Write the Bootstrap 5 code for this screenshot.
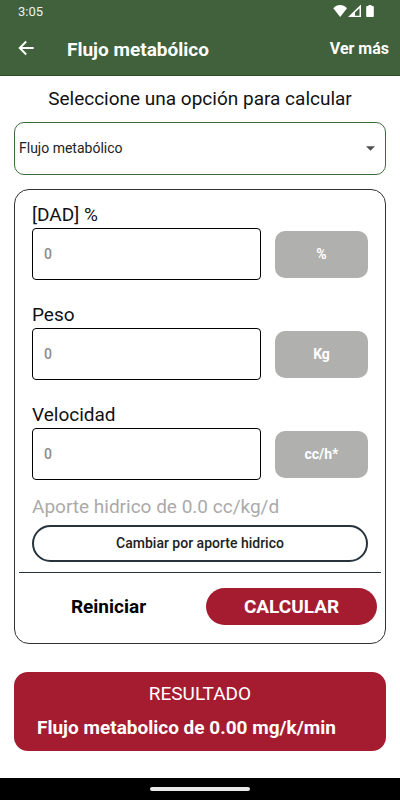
<!DOCTYPE html>
<html lang="es">
<head>
<meta charset="utf-8">
<meta name="viewport" content="width=device-width, initial-scale=1">
<title>Flujo metabólico</title>
<link href="https://cdn.jsdelivr.net/npm/bootstrap@5.3.0/dist/css/bootstrap.min.css" rel="stylesheet">
<style>
  body { font-family: Roboto, "Liberation Sans", sans-serif; color: #111; background: #fff; }
  .app-header { background: #40613b; border-bottom: 1px solid #2a5023; }
  .status-bar { height: 24px; padding: 0 24px 0 18px; font-size: 13px; line-height: 24px; color: #eef2ee; }
  .app-bar { height: 51px; padding: 0 11px 0 18px; }
  .app-title { font-size: 19px; line-height: 24px; font-weight: 700; margin-left: 32px; }
  .more-link { font-size: 16px; line-height: 24px; font-weight: 700; padding-bottom: 2px; }
  .app-main { padding: 0 14px; }
  .page-hint { font-size: 19px; line-height: 24px; padding: 11px 0; }
  .calc-select { height: 53px; border: 1px solid #3f6b3a; border-radius: 10px; padding: 0 36px 0 4px; font-size: 14px; color: #222; box-shadow: none;
    background-image: url("data:image/svg+xml,%3Csvg xmlns='http://www.w3.org/2000/svg' viewBox='0 0 10 5'%3E%3Cpath d='M0 0h10L5 5z' fill='%23505050'/%3E%3C/svg%3E");
    background-size: 9px 5px; background-position: right 10px center; }
  .calc-panel { border: 1px solid #333; border-radius: 15px; margin-top: 14px; padding: 13px 4px 18px; }
  .panel-fields { padding: 0 13px; }
  .field-group { margin-bottom: 23px; }
  .field-label, .field-note { font-size: 19px; line-height: 24px; }
  .field-label { margin-bottom: 1px; }
  .field-note { color: #aaa; margin: -8px 0 6px; }
  .field-row { gap: 14px; }
  .field-input { height: 52px; border: 1px solid #000; border-radius: 4px; padding: 0 11px; font-size: 14px; font-weight: 500; }
  .field-input::placeholder { color: #8c8c8c; opacity: 1; }
  .unit-btn { flex: 0 0 93px; height: 47px; background: #b0b0ae; color: #fff; border: 0; border-radius: 10px; font-size: 14px; font-weight: 700; }
  .switch-btn { height: 37px; border: 2px solid #27343e; border-radius: 19px; font-size: 14px; font-weight: 500; color: #222; padding: 0; }
  .panel-rule { border-top: 1px solid #27343e; opacity: 1; margin: 10px 0 15px; }
  .reset-btn, .calc-btn { height: 37px; font-size: 19px; line-height: 24px; font-weight: 700; padding: 0; border: 0; }
  .reset-btn { color: #000; }
  .calc-btn { background: #a51c30; color: #fff; border-radius: 19px; }
  .calc-btn:hover { background: #8f1829; color: #fff; }
  .result-box { background: #a51c30; color: #fff; border-radius: 14px; margin-top: 28px; padding: 10px 23px 11px; }
  .result-title { font-size: 19px; line-height: 24px; margin-bottom: 10px; }
  .result-value { font-size: 19px; line-height: 24px; font-weight: 700; }
  .gesture-bar { background: #000; height: 22px; }
  .gesture-pill { width: 100px; height: 4px; background: #e8e8e8; }
</style>
</head>
<body class="d-flex flex-column min-vh-100">
<header class="app-header text-white">
  <div class="status-bar d-flex align-items-center justify-content-between">
    <span>3:05</span>
    <svg width="44" height="16" viewBox="0 0 44 16" fill="#fff" aria-hidden="true">
      <path d="M1.300 4.200C5 0 11 0 15 4.200L8.200 13z"/>
      <path fill-rule="evenodd" d="M16 13L29 .5V13zM23 11.700h4.500V4.200L23 8.500z"/>
      <path d="M36.500 2V1h3v1h1.500q.8 0 .8.800v9.400q0 .8-.8.800h-6q-.8 0-.8-.8V2.800q0-.8.8-.8z"/>
    </svg>
  </div>
  <div class="app-bar d-flex align-items-center">
    <button type="button" class="btn p-0 pb-1 border-0 d-flex" aria-label="Volver">
      <svg width="17" height="16" viewBox="0 0 17 16" fill="none" stroke="#fff" stroke-width="1.900"><path d="M8.200 1.500L1.700 8L8.200 14.500M1.700 8H15.700"/></svg>
    </button>
    <h1 class="app-title mb-0">Flujo metabólico</h1>
    <a href="#" class="more-link ms-auto text-white text-decoration-none">Ver más</a>
  </div>
</header>
<main class="app-main flex-grow-1">
  <label for="calc" class="page-hint d-block text-center">Seleccione una opción para calcular</label>
  <select id="calc" class="form-select calc-select"><option>Flujo metabólico</option></select>
  <form class="calc-panel">
    <div class="panel-fields">
      <div class="field-group">
        <label for="dad" class="field-label d-block">[DAD] %</label>
        <div class="field-row d-flex align-items-center">
          <input id="dad" type="text" inputmode="decimal" class="form-control field-input" placeholder="0">
          <button type="button" class="btn unit-btn">%</button>
        </div>
      </div>
      <div class="field-group">
        <label for="peso" class="field-label d-block">Peso</label>
        <div class="field-row d-flex align-items-center">
          <input id="peso" type="text" inputmode="decimal" class="form-control field-input" placeholder="0">
          <button type="button" class="btn unit-btn">Kg</button>
        </div>
      </div>
      <div class="field-group">
        <label for="vel" class="field-label d-block">Velocidad</label>
        <div class="field-row d-flex align-items-center">
          <input id="vel" type="text" inputmode="decimal" class="form-control field-input" placeholder="0">
          <button type="button" class="btn unit-btn">cc/h*</button>
        </div>
      </div>
      <p class="field-note">Aporte hidrico de 0.0 cc/kg/d</p>
      <button type="button" class="btn switch-btn w-100">Cambiar por aporte hidrico</button>
    </div>
    <hr class="panel-rule">
    <div class="row g-0 pe-1">
      <div class="col-6"><button type="reset" class="btn reset-btn w-100">Reiniciar</button></div>
      <div class="col-6 ps-2"><button type="button" class="btn calc-btn w-100">CALCULAR</button></div>
    </div>
  </form>
  <section class="result-box">
    <h2 class="result-title text-center fw-normal">RESULTADO</h2>
    <p class="result-value mb-0">Flujo metabolico de 0.00 mg/k/min</p>
  </section>
</main>
<footer class="gesture-bar d-flex align-items-center justify-content-center"><div class="gesture-pill rounded-pill"></div></footer>
<script src="https://cdn.jsdelivr.net/npm/bootstrap@5.3.0/dist/js/bootstrap.bundle.min.js"></script>
</body>
</html>
